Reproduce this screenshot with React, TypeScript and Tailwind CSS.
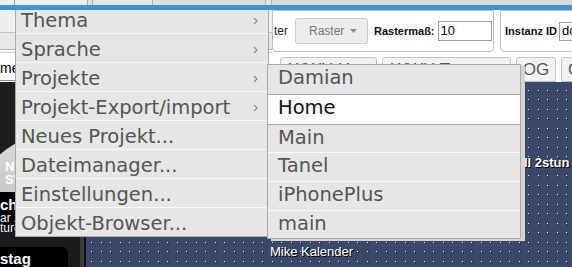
import React from "react";

const mainItems = [
  { label: "Thema", sub: true },
  { label: "Sprache", sub: true },
  { label: "Projekte", sub: true },
  { label: "Projekt-Export/import", sub: true },
  { label: "Neues Projekt...", sub: false },
  { label: "Dateimanager...", sub: false },
  { label: "Einstellungen...", sub: false },
  { label: "Objekt-Browser...", sub: false },
];

function Chevron() {
  return (
    <svg width="5" height="8" viewBox="0 0 5 8" className="shrink-0">
      <path d="M1 1 L4 4 L1 7" fill="none" stroke="#8a8a8a" strokeWidth="1.1" />
    </svg>
  );
}

function DotGrid() {
  return (
    <svg className="absolute inset-0" width="100%" height="100%">
      <defs>
        <pattern id="dots" x="5" y="8" width="19" height="19" patternUnits="userSpaceOnUse">
          <rect x="0" y="0" width="1" height="1" fill="#eef0f6" />
          <rect x="10" y="0" width="1" height="1" fill="#eef0f6" />
          <rect x="0" y="9" width="1" height="1" fill="#eef0f6" />
          <rect x="10" y="9" width="1" height="1" fill="#eef0f6" />
          <rect x="1" y="1" width="1" height="1" fill="#1c2338" />
          <rect x="11" y="1" width="1" height="1" fill="#1c2338" />
          <rect x="1" y="10" width="1" height="1" fill="#1c2338" />
          <rect x="11" y="10" width="1" height="1" fill="#1c2338" />
        </pattern>
      </defs>
      <rect width="100%" height="100%" fill="url(#dots)" />
    </svg>
  );
}

export default function App() {
  return (
    <div className="relative w-[572px] h-[267px] overflow-hidden bg-white font-['Liberation_Sans',Arial,sans-serif]">
      {/* top strip */}
      <div className="flex h-[5px] bg-[#e2e2e2]">
        <div className="w-[15px] shrink-0 border-r border-[#a0a0a0] bg-[#ececec]" />
        <div className="w-[73px] shrink-0 border-r border-[#b0b0b0] bg-[#eeeeee]" />
        <div className="w-[5px] shrink-0 border-r border-[#b0b0b0]" />
        <div className="w-[60px] shrink-0 border-r border-[#b0b0b0] bg-[#e8e8e8]" />
        <div className="w-[113px] shrink-0 border-r border-[#b0b0b0] bg-[#dedede]" />
        <div className="w-[6px] shrink-0 border-r border-[#b0b0b0]" />
        <div className="flex-1 bg-[#dadada]" />
      </div>
      {/* blue bar */}
      <div className="h-[5px] bg-[#3a95d2]" />

      {/* Row A: toolbar */}
      <div className="flex h-[47px] overflow-hidden">
        <div className="w-[272px] shrink-0 flex flex-col">
          <div className="h-[23px] bg-[#efefef] border-b border-[#c2c2c2]" />
          <div className="h-[17px] bg-[#e8e8e8] border-b border-[#bdbdbd]" />
          <div className="h-[3px] bg-white border-b border-[#c9c9c9]" />
          <div className="flex-1 bg-white" />
        </div>
        <div className="w-[222px] shrink-0 h-[42px] border border-[#bdbdbd] rounded-b-[4px] bg-white flex items-center pl-[1px]">
          <span className="w-[21px] shrink-0 text-[12px] text-[#222]">ter</span>
          <div className="w-[73px] shrink-0 h-[26px] border border-[#cccccc] rounded-[3px] bg-[#ececec] flex items-center pl-[13px] pr-[10px] justify-between">
            <span className="text-[12px] text-[#777]">Raster</span>
            <svg width="7" height="4" viewBox="0 0 7 4">
              <path d="M0 0 L7 0 L3.5 4 Z" fill="#8a8a8a" />
            </svg>
          </div>
          <span className="ml-[6px] shrink-0 whitespace-nowrap text-[11px] font-bold text-[#111]">Rastermaß:</span>
          <div className="ml-[3px] shrink-0 w-[54px] h-[20px] border border-[#a0a0a0] flex items-center pl-[2px] text-[13px] text-black">10</div>
        </div>
        <div className="ml-[6px] shrink-0 w-[100px] h-[42px] border border-[#bdbdbd] rounded-b-[4px] bg-white flex items-center pl-[4px]">
          <span className="shrink-0 whitespace-nowrap text-[11px] font-bold text-[#111]">Instanz ID</span>
          <div className="ml-[2px] shrink-0 w-[60px] h-[19px] border border-[#a0a0a0] flex items-center pl-[2px] text-[13px] text-black">dc</div>
        </div>
      </div>

      {/* Row B: tabs */}
      <div className="flex h-[25px] bg-white overflow-hidden">
        <div className="w-[80px] shrink-0 h-[24px] bg-white border-b border-[#8a8a8a] flex items-center text-[14px] text-black">me</div>
        <div className="ml-[200px] flex gap-[5px] shrink-0">
          <div className="w-[97px] shrink-0 h-[25px] border border-[#c4c4c4] rounded-t-[3px] bg-[#f2f2f2] flex items-center pl-[8px] text-[17px] text-[#555] whitespace-nowrap overflow-hidden">WWH Haus</div>
          <div className="w-[129px] shrink-0 h-[25px] border border-[#c4c4c4] rounded-t-[3px] bg-[#f2f2f2] flex items-center pl-[8px] text-[17px] text-[#555] whitespace-nowrap overflow-hidden">WWH Treppe</div>
          <div className="w-[40px] shrink-0 h-[25px] border border-[#c4c4c4] rounded-t-[3px] bg-[#f2f2f2] flex items-center justify-center text-[17px] text-[#555]">OG</div>
          <div className="w-[40px] shrink-0 h-[25px] border border-[#c4c4c4] rounded-t-[3px] bg-[#f2f2f2] flex items-center pl-[6px] text-[17px] text-[#555]">OG</div>
        </div>
      </div>

      {/* Row C: panels + canvas */}
      <div className="flex h-[185px]">
        <div className="w-[80px] shrink-0 bg-[#1b1b1b] flex flex-col">
          <div className="relative h-[115px] bg-[#1e1e1e] overflow-hidden flex flex-col justify-end pb-[6px] pl-[5px]">
            <svg className="absolute inset-0" width="80" height="115">
              <defs>
                <linearGradient id="ph" x1="0" y1="0" x2="0" y2="1">
                  <stop offset="0" stopColor="#dcdcdc" />
                  <stop offset="0.55" stopColor="#b8b8b8" />
                  <stop offset="1" stopColor="#7d7d7d" />
                </linearGradient>
              </defs>
              <ellipse cx="60" cy="150" rx="95" ry="100" fill="url(#ph)" />
            </svg>
            <span className="relative text-[13px] leading-[13px] font-bold text-white">Nie</span>
            <span className="relative text-[13px] leading-[13px] font-bold text-white">SW</span>
          </div>
          <div className="w-[68px] h-[40px] bg-black rounded-br-[6px] flex flex-col pt-[4px] text-white">
            <span className="text-[15px] leading-[17px] font-bold">ch</span>
            <span className="text-[12px] leading-[10px]">ar 2</span>
            <span className="text-[12px] leading-[11px]">ture: 3</span>
          </div>
          <div className="h-[16px]" />
          <div className="w-[68px] flex-1 bg-black rounded-tr-[6px] pt-[4px] text-[15px] font-bold text-white leading-[16px]">stag</div>
        </div>
        <div className="w-[4px] shrink-0 bg-[#3c3c3c]" />
        <div className="w-[2px] shrink-0 bg-[#111]" />
        <div className="relative flex-1 bg-[#3c4869] overflow-hidden">
          <DotGrid />
          <span className="absolute left-[438px] top-[71px] text-[13px] font-bold text-white whitespace-nowrap [text-shadow:1px_1px_0_#000]">ll 2stun</span>
          <span className="absolute left-[184px] top-[160px] text-[13px] text-white whitespace-nowrap [text-shadow:1px_1px_0_#000]">Mike Kalender</span>
        </div>
      </div>

      {/* main menu */}
      <div className="absolute left-[15px] top-[10px] w-[254px] h-[227px] overflow-hidden border-x border-b border-[#a9a9a9] bg-[#e6e6e6] font-['DejaVu_Sans',sans-serif] text-[19.5px] text-[#555]">
        <div className="-mt-[5px]">
          {mainItems.map((it, i) => (
            <div
              key={it.label}
              className={
                i < mainItems.length - 1
                  ? "flex items-center justify-between h-[29px] pt-[3px] pl-[5px] pr-[10px] border-b border-[#f8f8f8] whitespace-nowrap"
                  : "flex items-center justify-between h-[28px] pt-[3px] pl-[5px] pr-[10px] whitespace-nowrap"
              }
            >
              <span>{it.label}</span>
              {it.sub && <Chevron />}
            </div>
          ))}
        </div>
      </div>

      {/* submenu */}
      <div className="absolute left-[267px] top-[64px] w-[254px] border border-[#a9a9a9] bg-[#e6e6e6] shadow-[4px_2px_0_0_#d4d4d4] font-['DejaVu_Sans',sans-serif] text-[19.5px] leading-[26px] text-[#555]">
        <div className="h-[29px] pl-[10px]">Damian</div>
        <div className="h-[31px] border-y border-[#a9a9a9] bg-white pl-[10px] text-[#111]">Home</div>
        <div className="h-[28px] border-b border-[#f8f8f8] pl-[10px]">Main</div>
        <div className="h-[29px] border-b border-[#f8f8f8] pl-[10px]">Tanel</div>
        <div className="h-[29px] border-b border-[#f8f8f8] pl-[10px]">iPhonePlus</div>
        <div className="h-[27px] pl-[10px]">main</div>
      </div>
    </div>
  );
}
